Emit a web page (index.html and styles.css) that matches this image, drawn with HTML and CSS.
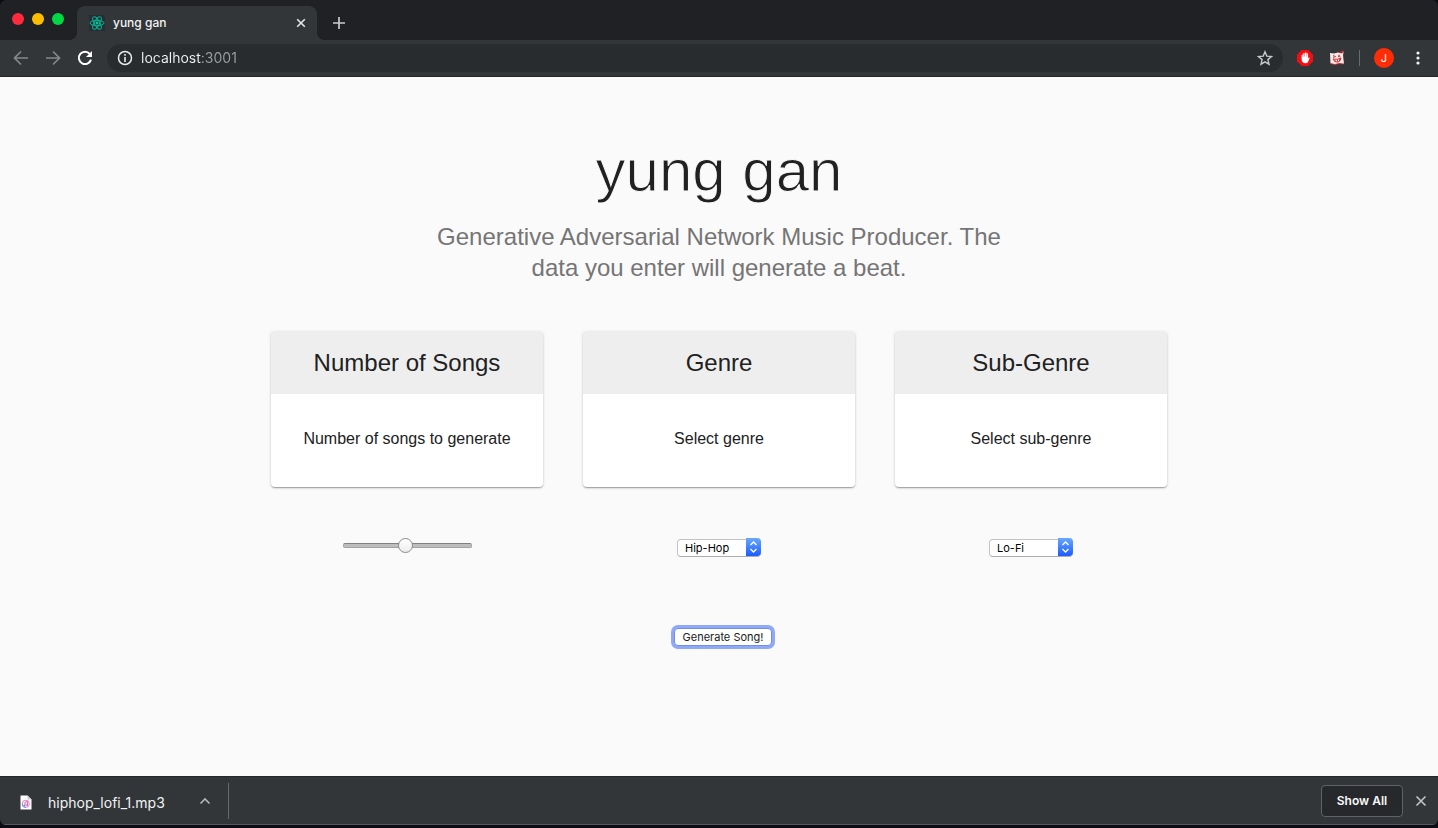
FILE: index.html
```html
<!DOCTYPE html>
<html lang="en">
<head>
<meta charset="utf-8">
<meta name="viewport" content="width=device-width, initial-scale=1">
<title>yung gan</title>
<link rel="stylesheet" href="styles.css">
</head>
<body>
<div class="window">
  <header class="tabstrip">
    <div class="lights">
      <button class="light light-red" aria-label="Close window"></button>
      <button class="light light-yellow" aria-label="Minimize window"></button>
      <button class="light light-green" aria-label="Zoom window"></button>
    </div>
    <div class="tab">
      <svg class="favicon" viewBox="0 0 16 16" aria-hidden="true">
        <rect width="16" height="16" fill="#282c34"/>
        <g fill="none" stroke="#00b894" stroke-width="1">
          <ellipse cx="8" cy="8" rx="7" ry="2.7"/>
          <ellipse cx="8" cy="8" rx="7" ry="2.7" transform="rotate(60 8 8)"/>
          <ellipse cx="8" cy="8" rx="7" ry="2.7" transform="rotate(120 8 8)"/>
        </g>
        <circle cx="8" cy="8" r="1.4" fill="#00c9a0"/>
      </svg>
      <span class="tab-title">yung gan</span>
      <button class="icon-button tab-close" aria-label="Close tab">
        <svg width="10" height="10" viewBox="0 0 10 10"><path d="M1.2 1.2 8.8 8.8M8.8 1.2 1.2 8.8" stroke="#e4e6e7" stroke-width="1.6"/></svg>
      </button>
    </div>
    <button class="icon-button new-tab" aria-label="New tab">
      <svg width="14" height="14" viewBox="0 0 14 14"><path d="M7 1v12M1 7h12" stroke="#c9cbcd" stroke-width="1.7"/></svg>
    </button>
  </header>

  <nav class="toolbar" aria-label="Browser toolbar">
    <div class="nav-buttons">
      <button class="icon-button" aria-label="Back">
        <svg width="16" height="16" viewBox="0 0 16 16"><path d="M15 8H2M8 1.5 1.5 8 8 14.500" fill="none" stroke="#85898b" stroke-width="1.7"/></svg>
      </button>
      <button class="icon-button" aria-label="Forward">
        <svg width="16" height="16" viewBox="0 0 16 16"><path d="M1 8h13M8 1.5 14.500 8 8 14.500" fill="none" stroke="#85898b" stroke-width="1.7"/></svg>
      </button>
      <button class="icon-button" aria-label="Reload">
        <svg width="16" height="16" viewBox="0 0 16 16"><path d="M12.900 4A6.200 6.200 0 1 0 14 9.600" fill="none" stroke="#fff" stroke-width="2"/><path d="M15 1v6H9z" fill="#fff"/></svg>
      </button>
    </div>
    <div class="omnibox">
      <svg width="16" height="16" viewBox="0 0 16 16" aria-hidden="true"><circle cx="8" cy="8" r="6.500" fill="none" stroke="#e8eaed" stroke-width="1.500"/><path d="M8 7v5M8 4v1.800" stroke="#e8eaed" stroke-width="1.600"/></svg>
      <input class="address" type="text" value="localhost:3001" aria-label="Address">
      <button class="icon-button" aria-label="Bookmark this page">
        <svg width="16" height="16" viewBox="0 0 16 16"><path d="m8 1.800 1.800 4.300 4.700.4-3.600 3.100 1.100 4.600L8 11.800l-4 2.400 1.100-4.600-3.600-3.100 4.700-.4z" fill="none" stroke="#c6c9cb" stroke-width="1.400"/></svg>
      </button>
    </div>
    <div class="extensions">
      <button class="icon-button" aria-label="Ad blocker">
        <svg width="16" height="16" viewBox="0 0 16 16"><path d="M4.700 0h6.600L16 4.700v6.600L11.300 16H4.700L0 11.300V4.700z" fill="#f40d12"/><path d="M4.600 8.500V5.200q0-.8.6-.8t.6.8V7h.4V3.700q0-.8.7-.8t.7.8V6.500H8V3q0-.8.7-.8t.7.8v3.700h.3V4q0-.8.7-.8t.7.8v4.700l.5-.9q.7-.7 1.200 0l-1.700 4q-.7 1.500-2.600 1.500-3.900 0-3.900-4.800z" fill="#fff"/></svg>
      </button>
      <button class="icon-button" aria-label="Extension">
        <svg width="16" height="16" viewBox="0 0 16 16"><path d="m1 3 4 .5 4-1 3 0L14 .5l.5 2.500-.5 2 1 9-5-.5-4 1-4.500-1z" fill="#fbe9e9"/><path d="m9 2.500 5-2-.5 3z" fill="#c4161c"/><path d="m4 5.500 2.500 1L4 7.500M11 5 9 6.200l2.500.8M4 9q4 1 8-.8-.5 3.600-3.500 4T4 9M6 9.700v2M8.500 9.700v2M10.500 9v2" fill="none" stroke="#cf2128" stroke-width=".9"/><path d="m1.500 13.500 4.500 1 4-1 5 .5" fill="none" stroke="#cf2128" stroke-width=".8"/></svg>
      </button>
      <span class="toolbar-divider"></span>
      <button class="avatar" aria-label="Profile">J</button>
      <button class="icon-button" aria-label="Menu">
        <svg width="16" height="16" viewBox="0 0 16 16" fill="#f1f3f4"><circle cx="8" cy="3" r="1.600"/><circle cx="8" cy="8" r="1.600"/><circle cx="8" cy="13" r="1.600"/></svg>
      </button>
    </div>
  </nav>

  <main class="page">
    <section class="hero">
      <h1 class="title">yung gan</h1>
      <p class="subtitle">Generative Adversarial Network Music Producer. The data you enter will generate a beat.</p>
    </section>
    <form class="generator">
      <div class="grid">
        <section class="card">
          <h2 class="card-title">Number of Songs</h2>
          <label class="card-text" for="songs">Number of songs to generate</label>
        </section>
        <section class="card">
          <h2 class="card-title">Genre</h2>
          <label class="card-text" for="genre">Select genre</label>
        </section>
        <section class="card">
          <h2 class="card-title">Sub-Genre</h2>
          <label class="card-text" for="subgenre">Select sub-genre</label>
        </section>
      </div>
      <div class="grid controls">
        <div class="control">
          <input class="slider" id="songs" type="range" min="0" max="100" value="49">
        </div>
        <div class="control">
          <span class="picker">
            <select class="select" id="genre"><option>Hip-Hop</option></select>
            <svg class="stepper" viewBox="0 0 15 18" aria-hidden="true"><path d="m4.500 7 3-3 3 3M4.500 11l3 3 3-3" fill="none" stroke="#fff" stroke-width="1.400"/></svg>
          </span>
        </div>
        <div class="control">
          <span class="picker">
            <select class="select" id="subgenre"><option>Lo-Fi</option></select>
            <svg class="stepper" viewBox="0 0 15 18" aria-hidden="true"><path d="m4.500 7 3-3 3 3M4.500 11l3 3 3-3" fill="none" stroke="#fff" stroke-width="1.400"/></svg>
          </span>
        </div>
      </div>
      <div class="actions">
        <button class="generate" type="button">Generate Song!</button>
      </div>
    </form>
  </main>

  <footer class="downloads">
    <button class="download">
      <svg width="12" height="15" viewBox="0 0 12 15" aria-hidden="true"><path d="M.5.500h7l4 4v10H.5z" fill="#fff"/><path d="M7.500.500v4h4z" fill="#c9ccd0"/><circle cx="5.800" cy="8.800" r="3.600" fill="none" stroke="#df6dcb" stroke-width=".9"/><path d="M2.200 8.800a3.600 3.600 0 0 0 3.600 3.600" fill="none" stroke="#5b8df2" stroke-width="1"/><path d="M5 10.500V7.200l2.600-.6v3.300" fill="none" stroke="#e9507e" stroke-width=".9"/><circle cx="4.500" cy="10.500" r=".9" fill="#6b8cf0"/><circle cx="7.100" cy="10" r=".9" fill="#e9507e"/></svg>
      <span>hiphop_lofi_1.mp3</span>
    </button>
    <button class="icon-button download-menu" aria-label="Download options">
      <svg width="12" height="8" viewBox="0 0 12 8"><path d="M1.500 6.500 6 2l4.500 4.500" fill="none" stroke="#b4b7b9" stroke-width="1.600"/></svg>
    </button>
    <button class="show-all">Show All</button>
    <button class="icon-button" aria-label="Close downloads bar">
      <svg width="12" height="12" viewBox="0 0 12 12"><path d="m1.500 1.500 9 9M10.500 1.500l-9 9" stroke="#bfc2c4" stroke-width="1.700"/></svg>
    </button>
  </footer>
</div>
<div class="desktop"></div>
</body>
</html>
```

FILE: styles.css
```css
* { box-sizing: border-box; }

body {
  margin: 0;
  min-height: 100vh;
  display: flex;
  flex-direction: column;
  background: #0c0c14;
  font-family: "Liberation Sans", Arial, sans-serif;
  color: #212121;
}

button, input, select { font-family: Inter, sans-serif; }

.window {
  flex: 1;
  display: flex;
  flex-direction: column;
  overflow: hidden;
  border-radius: 6px;
}

.icon-button {
  display: grid;
  place-items: center;
  width: 16px;
  height: 16px;
  flex: none;
  padding: 0;
  border: 0;
  background: none;
}

/* Tab strip */
.tabstrip {
  display: flex;
  align-items: flex-end;
  height: 40px;
  padding-left: 12px;
  background: #202124;
}

.lights {
  display: flex;
  gap: 8px;
  align-self: flex-start;
  margin: 13px 13px 0 0;
}

.light {
  width: 12px;
  height: 12px;
  padding: 0;
  border: 0;
  border-radius: 50%;
}

.light-red { background: #ff2b3d; }
.light-yellow { background: #ffbd00; }
.light-green { background: #00d944; }

.tab {
  position: relative;
  display: flex;
  align-items: center;
  gap: 8px;
  width: 240px;
  height: 34px;
  padding: 0 8px 0 12px;
  border-radius: 8px 8px 0 0;
  background: #323639;
  font: 500 12px/16px Inter, sans-serif;
  color: #f1f3f4;
}

.tab::before, .tab::after {
  content: "";
  position: absolute;
  bottom: 0;
  width: 8px;
  height: 8px;
}

.tab::before { right: 100%; background: radial-gradient(circle at 0 0, #202124 8px, #323639 8px); }
.tab::after { left: 100%; background: radial-gradient(circle at 100% 0, #202124 8px, #323639 8px); }

.favicon { width: 16px; height: 16px; }
.tab-title { flex: 1; }
.new-tab { margin: 0 0 9px 14px; }

/* Toolbar */
.toolbar {
  display: flex;
  align-items: center;
  height: 37px;
  padding: 0 12px 0 13px;
  border-bottom: 1px solid #232628;
  background: #323639;
}

.nav-buttons { display: flex; gap: 16px; }

.omnibox {
  flex: 1;
  display: flex;
  align-items: center;
  gap: 8px;
  height: 28px;
  margin: 0 14px;
  padding: 0 10px;
  border-radius: 14px;
  background: #282c2f;
}

.address {
  flex: 1;
  min-width: 0;
  padding: 0;
  border: 0;
  outline: 0;
  background: linear-gradient(90deg, #f1f3f4 60px, #9aa0a3 60px);
  -webkit-background-clip: text;
  background-clip: text;
  color: transparent;
  font-size: 14px;
  line-height: 20px;
}

.extensions { display: flex; align-items: center; gap: 16px; }

.toolbar-divider {
  width: 1px;
  height: 16px;
  margin: 0 -2px;
  background: #686c6e;
}

.avatar {
  width: 20px;
  height: 20px;
  padding: 0;
  border: 0;
  border-radius: 50%;
  background: #ff2d07;
  color: #fff;
  font-size: 11px;
}

/* Page */
.page {
  flex: 1;
  padding: 64px 24px 32px;
  background: #fafafa;
}

.hero {
  max-width: 600px;
  margin: 0 auto 48px;
  text-align: center;
}

.title {
  margin: 0 0 20px;
  font-size: 60px;
  font-weight: 300;
  line-height: 60px;
  -webkit-text-stroke: 1px #fafafa;
}

.subtitle {
  margin: 0;
  font-size: 24px;
  line-height: 31px;
  color: #757575;
}

.generator { max-width: 896px; margin: 0 auto; }

.grid {
  display: grid;
  grid-template-columns: repeat(3, 1fr);
  gap: 40px;
}

.card {
  overflow: hidden;
  border-radius: 4px;
  background: #fff;
  box-shadow: 0 1px 3px rgba(0, 0, 0, .2), 0 1px 1px rgba(0, 0, 0, .14), 0 2px 1px -1px rgba(0, 0, 0, .12);
  text-align: center;
}

.card-title {
  margin: 0;
  padding: 16px;
  background: #eee;
  font-size: 24px;
  font-weight: 400;
  line-height: 31px;
}

.card-text {
  display: block;
  padding: 33px 16px 36px;
  font-size: 16px;
  line-height: 24px;
}

.controls { margin-top: 51px; }

.control {
  display: flex;
  justify-content: center;
  height: 18px;
}

.slider {
  appearance: none;
  width: 129px;
  height: 15px;
  margin: 0;
  background: none;
}

.slider::-webkit-slider-runnable-track {
  height: 5px;
  border: 1px solid #a3a3a3;
  border-top-color: #808080;
  border-radius: 2px;
  background: #bdbdbd;
}

.slider::-webkit-slider-thumb {
  appearance: none;
  width: 15px;
  height: 15px;
  margin-top: -6px;
  border: 1px solid #8a8a8a;
  border-radius: 50%;
  background: linear-gradient(#fff, #ececec);
}

.picker { position: relative; width: 84px; height: 18px; }

.select {
  appearance: none;
  width: 100%;
  height: 18px;
  padding: 0 20px 0 7px;
  border: 1px solid #c4c4c4;
  border-bottom-color: #adadad;
  border-radius: 4px;
  background: #fff;
  font-size: 11px;
  line-height: 16px;
  color: #000;
}

.stepper {
  position: absolute;
  top: 0;
  right: 0;
  width: 15px;
  height: 18px;
  border-radius: 0 4px 4px 0;
  background: linear-gradient(#6aa9fb, #1c5cff);
  pointer-events: none;
}

.actions {
  display: flex;
  justify-content: center;
  margin-top: 72px;
  padding-left: 8px;
}

.generate {
  width: 98px;
  height: 18px;
  padding: 0;
  border: 1px solid #7390e0;
  border-radius: 4px;
  background: #fff;
  box-shadow: 0 0 0 3px #8fa8f8;
  font-size: 11px;
  line-height: 16px;
  color: #212121;
}

/* Downloads bar */
.downloads {
  display: flex;
  align-items: center;
  height: 49px;
  padding: 0 9px 0 20px;
  border-top: 1px solid #25292b;
  border-bottom: 1px solid #55595b;
  background: #323639;
}

.download {
  display: flex;
  align-items: center;
  gap: 16px;
  flex: none;
  padding: 4px 0 0;
  border: 0;
  background: none;
  color: #f1f3f4;
  font-size: 14px;
  line-height: 20px;
}

.download-menu {
  width: 46px;
  height: 36px;
  margin: 0 auto 0 18px;
  border-right: 1px solid #66696b;
}

.show-all {
  width: 82px;
  height: 32px;
  margin-right: 10px;
  padding: 0;
  border: 1px solid #5f6368;
  border-radius: 4px;
  background: #27282c;
  color: #f8f9fa;
  font-size: 12px;
  font-weight: 600;
}

.desktop { height: 3px; background: #0c0c14; }
```
